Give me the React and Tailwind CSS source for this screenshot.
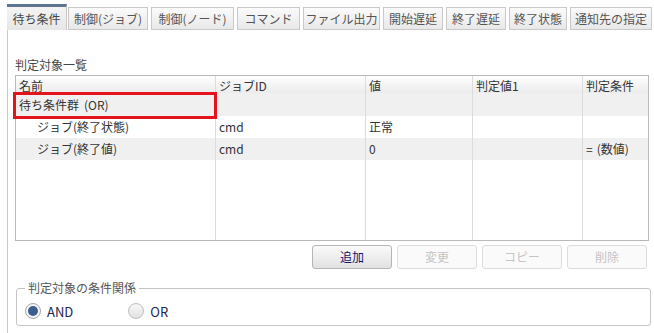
import React from "react";

const tabs = [
  ["待ち条件", "w-[60px]"],
  ["制御(ジョブ)", "w-[80px]"],
  ["制御(ノード)", "w-[83px]"],
  ["コマンド", "w-[63px]"],
  ["ファイル出力", "w-[77px]"],
  ["開始遅延", "w-[60px]"],
  ["終了遅延", "w-[60px]"],
  ["終了状態", "w-[58px]"],
  ["通知先の指定", "w-[82px]"],
];

const cols = [
  { w: "w-[200px]" },
  { w: "w-[150px]" },
  { w: "w-[107px]" },
  { w: "w-[110px]" },
  { w: "flex-1" },
];

function Row({ cells, bg, indent, h = "h-[22px]" }) {
  return (
    <div className={`flex ${h} ${bg}`}>
      {cells.map((c, i) => (
        <div
          key={i}
          className={`${cols[i].w} shrink-0 ${i < 4 ? "border-r border-[#dcdcdc]" : ""} flex items-center ${i === 0 && indent ? "pl-[21px]" : "pl-[3px]"} whitespace-nowrap overflow-hidden`}
        >
          {c}
        </div>
      ))}
    </div>
  );
}

export default function App() {
  return (
    <div className="w-[654px] h-[333px] bg-white overflow-hidden text-[12px] text-[#333] leading-none" style={{ fontFamily: '"Noto Sans CJK JP", "Noto Sans", sans-serif' }}>
      {/* tabs */}
      <div className="flex items-end pl-[7px] pt-[4px] gap-[3px] h-[30px]">
        {tabs.map(([t, w], i) =>
          i === 0 ? (
            <div key={t} className={`${w} shrink-0 h-[26px] -mr-[2px] flex items-center justify-center whitespace-nowrap border-t-[3px] border-t-[#5d7593] border-r border-[#c9c9c9] bg-gradient-to-b from-[#f4f4f4] to-[#e6e6e6] text-[#444]`}>
              {t}
            </div>
          ) : (
            <div key={t} className={`${w} shrink-0 h-[23px] flex items-center justify-center whitespace-nowrap border border-[#c9c9c9] bg-gradient-to-b from-[#fbfbfb] to-[#e8e8e8] text-[#555]`}>
              {t}
            </div>
          )
        )}
      </div>
      {/* panel */}
      <div className="ml-[7px] border-l border-[#c9c9c9] h-[303px] pl-[7px] pt-[28px]">
        <div className="text-[#444] h-[14px] flex items-center">判定対象一覧</div>
        <div className="mt-[3px] w-[634px] h-[166px] border border-[#b9b9b9] flex flex-col">
          <div className="flex h-[17px] bg-gradient-to-b from-[#ffffff] to-[#ebebeb] text-[#333]">
            {["名前", "ジョブID", "値", "判定値1", "判定条件"].map((c, i) => (
              <div key={i} className={`${cols[i].w} shrink-0 ${i < 4 ? "border-r border-[#dcdcdc]" : ""} flex items-end pb-[1px] pl-[3px]`}>
                {c}
              </div>
            ))}
          </div>
          <div className="relative">
            <Row cells={[<span key="a">待ち条件群<span className="ml-[5px]">(OR)</span></span>, "", "", "", ""]} bg="bg-[#f0f0f0]" h="h-[23px]" />
            <div className="absolute left-[-3px] top-[-1px] w-[204px] h-[27px] border-[3px] border-[#e3141c]" />
          </div>
          <Row cells={["ジョブ(終了状態)", "cmd", "正常", "", ""]} bg="bg-white" indent />
          <Row cells={["ジョブ(終了値)", "cmd", "0", "", <span key="b">=<span className="ml-[4px]">(数値)</span></span>]} bg="bg-[#f0f0f0]" indent />
          <div className="flex flex-1">
            {cols.map((c, i) => (
              <div key={i} className={`${c.w} shrink-0 ${i < 4 ? "border-r border-[#dcdcdc]" : ""}`} />
            ))}
          </div>
        </div>
        <div className="flex justify-end gap-[5px] w-[632px] mt-[4px]">
          <button className="w-[80px] h-[24px] rounded-[3px] border border-[#b5b5b5] bg-gradient-to-b from-[#fafafa] to-[#e2e2e2] text-[#14146e]">追加</button>
          <button className="w-[80px] h-[24px] rounded-[3px] border border-[#dcdcdc] bg-[#fafafa] text-[#c4c4c4]">変更</button>
          <button className="w-[80px] h-[24px] rounded-[3px] border border-[#dcdcdc] bg-[#fafafa] text-[#c4c4c4]">コピー</button>
          <button className="w-[80px] h-[24px] rounded-[3px] border border-[#dcdcdc] bg-[#fafafa] text-[#c4c4c4]">削除</button>
        </div>
        <fieldset className="mt-[12px] ml-[1px] w-[635px] h-[45px] border border-[#c4c4c4] rounded-[3px] px-[8px] pb-0">
          <legend className="px-[3px] text-[#555] leading-[14px]">判定対象の条件関係</legend>
          <div className="flex items-center h-[22px] mt-[5px]">
            <span className="w-[16px] h-[16px] rounded-full border border-[#a8a8a8] bg-[#f4f4f4] flex items-center justify-center">
              <span className="w-[10px] h-[10px] rounded-full bg-[#3c5e8f]" />
            </span>
            <span className="ml-[6px] text-[#1b2650] text-[13px]">AND</span>
            <span className="ml-[55px] w-[16px] h-[16px] rounded-full border border-[#bdbdbd] bg-gradient-to-b from-[#f7f7f7] to-[#e2e2e2]" />
            <span className="ml-[6px] text-[#1b2650] text-[13px]">OR</span>
          </div>
        </fieldset>
      </div>
    </div>
  );
}
